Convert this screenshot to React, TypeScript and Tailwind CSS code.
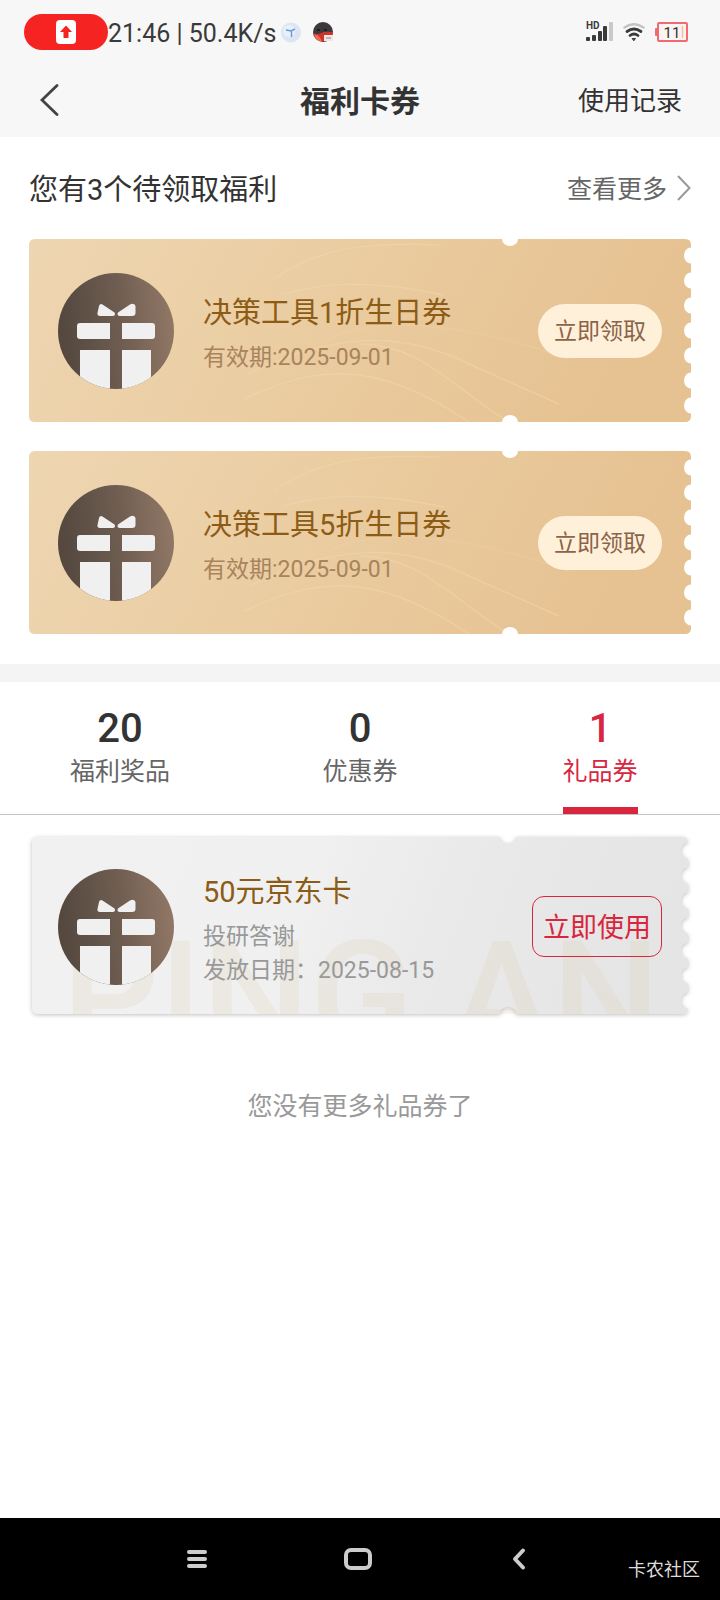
import { useState, type ReactNode } from 'react';

const coupons = [
  { id: 'c1', title: '决策工具1折生日券', expires: '2025-09-01' },
  { id: 'c2', title: '决策工具5折生日券', expires: '2025-09-01' },
];

const tabs = [
  { id: 'prize', label: '福利奖品', count: 20 },
  { id: 'discount', label: '优惠券', count: 0 },
  { id: 'gift', label: '礼品券', count: 1 },
];

// Outline of a ticket: rounded corners, a notch top and bottom, seven bites on the right
function ticketPath(w: number, h: number, notchX: number) {
  const r = 6;
  const step = 25;
  const first = h / 2 - step * 3;
  let d = `M${r} 0H${notchX - 8}A8 7 0 0 0 ${notchX + 8} 0H${w - r}Q${w} 0 ${w} ${r}`;
  for (let i = 0; i < 7; i++) {
    const y = first + i * step;
    d += `V${y - 8}A7 8 0 0 0 ${w} ${y + 8}`;
  }
  d += `V${h - r}Q${w} ${h} ${w - r} ${h}H${notchX + 8}A8 7 0 0 0 ${notchX - 8} ${h}H${r}Q0 ${h} 0 ${h - r}V${r}Q0 0 ${r} 0Z`;
  return d;
}

function GoldTicketShape() {
  return (
    <svg viewBox="0 0 662 183" preserveAspectRatio="none" className="absolute inset-0 h-full w-full" aria-hidden="true">
      <defs>
        <linearGradient id="gold" x1="0" y1="0" x2="1" y2="0.15">
          <stop offset="0" stopColor="#eed6b2" />
          <stop offset="0.5" stopColor="#eaccA0" />
          <stop offset="1" stopColor="#e6c191" />
        </linearGradient>
        <clipPath id="goldClip">
          <path d={ticketPath(662, 183, 481)} />
        </clipPath>
      </defs>
      <g clipPath="url(#goldClip)">
        <rect width="662" height="183" fill="url(#gold)" />
        <g fill="none" stroke="#f3dcb4" strokeWidth="1.5" strokeOpacity="0.4">
          <path d="M225 30Q240 12 252 2" strokeOpacity="0.25" />
          <path d="M245 40C290 8 340 3 410 6" />
          <path d="M255 55C300 42 350 42 415 56" />
          <path d="M300 100C350 75 440 85 540 120" strokeOpacity="0.2" />
          <path d="M220 135C300 95 370 90 440 125T530 165" />
          <path d="M330 105C390 105 420 145 475 180" />
          <path d="M215 160C280 130 340 115 440 183" />
        </g>
      </g>
    </svg>
  );
}

function SilverTicketShape() {
  return (
    <svg viewBox="0 0 656 177" preserveAspectRatio="none" className="absolute inset-0 h-full w-full overflow-visible drop-shadow-[0_1px_2px_rgba(0,0,0,0.25)]" aria-hidden="true">
      <defs>
        <linearGradient id="silver" x1="0" y1="0" x2="1" y2="0.1">
          <stop offset="0" stopColor="#f1f1f1" />
          <stop offset="0.45" stopColor="#f0f0f0" />
          <stop offset="0.65" stopColor="#eaeaea" />
          <stop offset="1" stopColor="#e5e5e5" />
        </linearGradient>
      </defs>
      <path d={ticketPath(656, 177, 476)} fill="url(#silver)" />
    </svg>
  );
}

function GiftIcon() {
  return (
    <svg viewBox="0 0 116 116" className="size-[116px] shrink-0" aria-hidden="true">
      <defs>
        <linearGradient id="brown" x1="0" y1="0.1" x2="1" y2="0">
          <stop offset="0" stopColor="#54483f" />
          <stop offset="0.5" stopColor="#6f5d51" />
          <stop offset="1" stopColor="#947a67" />
        </linearGradient>
        <clipPath id="disc">
          <circle cx="58" cy="58" r="58" />
        </clipPath>
      </defs>
      <g clipPath="url(#disc)">
        <rect width="116" height="116" fill="url(#brown)" />
        <g fill="#f1f0f0">
          <path d="M44.500 31.500L56.500 39.500Q58 42.500 55 43H42Q39 43 39.500 40L41 33Q42 30 44.500 31.500Z" />
          <path d="M72 31.500L60 39.500Q58.500 42.500 61.500 43H74Q77.500 43 77.500 40V33Q76 29.500 72 31.500Z" />
          <path d="M22 50H52V66H22Q19 66 19 63V53Q19 50 22 50Z" />
          <path d="M64 50H94Q97 50 97 53V63Q97 66 94 66H64Z" />
          <path d="M22 77H52V117H22Z" />
          <path d="M64 77H93V117H64Z" />
        </g>
      </g>
    </svg>
  );
}

function StatusBar() {
  return (
    <div className="flex h-16 items-center pl-6 pr-8 text-[#3a3a3a]">
      <div className="flex h-9 w-[84px] items-center justify-center rounded-full bg-[#f62323]">
        <svg viewBox="0 0 20 24" className="h-6 w-5" aria-hidden="true">
          <rect width="20" height="24" rx="4" fill="#fff" />
          <path d="M10 5.500L16 12H12.500V18H7.500V12H4Z" fill="#f62323" />
        </svg>
      </div>
      <span className="pt-1 text-[25px]">21:46 | 50.4K/s</span>
      <svg viewBox="0 0 22 22" className="ml-1 size-[22px]" aria-hidden="true">
        <circle cx="11" cy="11.500" r="10" fill="#dce5f4" />
        <circle cx="9" cy="10" r="6" fill="#eaf0fa" />
        <path d="M6 9L11.500 10V16M11 10L15 8" stroke="#6f9bd8" strokeWidth="1.500" fill="none" />
      </svg>
      <svg viewBox="0 0 22 22" className="ml-2.5 size-[22px]" aria-hidden="true">
        <circle cx="11" cy="11" r="10" fill="#3b393d" />
        <path d="M1.200 12Q6 14 9 12T20.900 11Q20.500 18 14 20.500Q4 21 1.200 12Z" fill="#cf3328" />
        <path d="M2 14Q7 12 10 20.800Q4 20 2 14Z" fill="#ef6a4b" />
        <path d="M5 9H8M12 9H15" stroke="#17161a" strokeWidth="1.500" />
        <rect x="12" y="14" width="9" height="6" fill="#f0e6e8" />
        <path d="M14 17H19" stroke="#8a8088" />
      </svg>
      <div className="ml-auto flex items-center gap-2.5">
        <svg viewBox="0 0 27 20" className="h-5 w-[27px] overflow-visible" aria-hidden="true">
          <g fill="#3a3a3a">
            <rect x="0" y="15" width="4" height="4" rx="1" />
            <rect x="6" y="13" width="4" height="6" rx="1" />
            <rect x="12" y="9" width="4" height="10" rx="1" />
            <rect x="17" y="4" width="4" height="15" rx="1" />
          </g>
          <rect x="23" y="0" width="4" height="19" rx="1" fill="#c9c9c9" />
          <text x="0" y="7" fontSize="10" fontWeight="700" fill="#3a3a3a">HD</text>
        </svg>
        <svg viewBox="0 0 22 19" className="h-[19px] w-[22px]" fill="none" strokeLinecap="round" aria-hidden="true">
          <path d="M1.500 4.500Q11 -2 20.500 4.500" stroke="#c4c4c4" strokeWidth="2.500" />
          <path d="M4 8.500Q11 3.500 18 8.500" stroke="#3a3a3a" strokeWidth="2.800" />
          <path d="M7 12.500Q11 9.500 15 12.500" stroke="#3a3a3a" strokeWidth="2.800" />
          <path d="M9.500 15.500H12.500L11 17.500Z" fill="#3a3a3a" stroke="#3a3a3a" />
        </svg>
        <svg viewBox="0 0 33 20" className="h-5 w-[33px]" aria-hidden="true">
          <rect x="0" y="6" width="3" height="8" rx="1" fill="#ef6b70" />
          <rect x="3" y="1" width="29" height="18" rx="1" fill="#fbf3f2" stroke="#ef6b70" strokeWidth="2" />
          <path d="M27.500 4V16" stroke="#f4c08c" strokeWidth="1.500" />
          <text x="17" y="16" fontSize="15" textAnchor="middle" fill="#333">11</text>
        </svg>
      </div>
    </div>
  );
}

function TicketBody({ title, children, action }: { title: string; children: ReactNode; action: ReactNode }) {
  return (
    <>
      <GiftIcon />
      <div className="ml-[29px] min-w-0 flex-1 pt-1.5">
        <h3 className="mb-2 text-[29px] leading-10 text-[#8c5c16]">{title}</h3>
        {children}
      </div>
      {action}
    </>
  );
}

export default function App() {
  const [active, setActive] = useState('gift');

  return (
    <div className="flex min-h-screen flex-col bg-white font-[Roboto,'Noto_Sans_CJK_SC',sans-serif] text-[#333]">
      <header className="bg-[#f7f7f7]">
        <StatusBar />
        <div className="grid h-[73px] grid-cols-3 items-center px-[38px]">
          <button type="button" aria-label="返回" className="justify-self-start">
            <svg viewBox="0 0 24 34" className="h-[34px] w-6" fill="none" stroke="#444" strokeWidth="2.800" strokeLinecap="round" aria-hidden="true">
              <path d="M19 1.500L4 16L19 30.500" />
            </svg>
          </button>
          <h1 className="pt-0.5 text-center text-[30px] font-bold">福利卡券</h1>
          <a href="#records" className="justify-self-end pt-0.5 text-[26px]">使用记录</a>
        </div>
      </header>

      <section className="px-[29px] pb-[30px]">
        <div className="flex h-[102px] items-center justify-between">
          <h2 className="pt-1.5 text-[29px]">您有3个待领取福利</h2>
          <a href="#more" className="flex items-center gap-2.5 text-[25px] text-[#666]">
            <span className="pt-1">查看更多</span>
            <svg viewBox="0 0 14 26" className="h-[26px] w-3.5" fill="none" stroke="#999" strokeWidth="2" aria-hidden="true">
              <path d="M1 1L12.500 13L1 25" />
            </svg>
          </a>
        </div>
        <div className="flex flex-col gap-[29px]">
          {coupons.map((c) => (
            <article key={c.id} className="relative h-[183px]">
              <GoldTicketShape />
              <div className="relative flex h-full items-center px-[29px]">
                <TicketBody
                  title={c.title}
                  action={
                    <button type="button" className="h-[54px] rounded-full bg-[#fff0d9] px-4 pt-1 text-[23px] text-[#8b6349]">
                      立即领取
                    </button>
                  }
                >
                  <p className="text-[23px] leading-[34px] text-[#a8835c]">有效期:{c.expires}</p>
                </TicketBody>
              </div>
            </article>
          ))}
        </div>
      </section>

      <div className="h-[18px] bg-[#f4f4f4]" />

      <div role="tablist" className="flex border-b border-[#c4c4c4]">
        {tabs.map((t) => (
          <button
            key={t.id}
            type="button"
            role="tab"
            aria-selected={t.id === active}
            onClick={() => setActive(t.id)}
            className={`relative flex h-[132px] flex-1 flex-col items-center pt-[23px] ${t.id === active ? 'text-[#d9263f]' : ''}`}
          >
            <span className="text-[40px] font-medium leading-[48px]">{t.count}</span>
            <span className={`text-[25px] leading-[38px] ${t.id === active ? '' : 'text-[#666]'}`}>{t.label}</span>
            {t.id === active && <span className="absolute bottom-0 h-[7px] w-[75px] bg-[#d9263f]" />}
          </button>
        ))}
      </div>

      <section className="px-8 pt-[22px]">
        <article className="relative h-[177px]">
          <SilverTicketShape />
          <div className="absolute inset-0 overflow-hidden" aria-hidden="true">
            <span className="absolute left-[30px] top-[78px] whitespace-nowrap text-[152px] font-medium leading-[164px] text-[#dcc8aa]/20">
              PING AN
            </span>
          </div>
          <div className="relative flex h-full items-center px-[26px] pt-0.5">
            <TicketBody
              title="50元京东卡"
              action={
                <button type="button" className="h-[61px] rounded-xl border border-[#d9263f] px-[10px] pt-1 text-[27px] text-[#d9263f]">
                  立即使用
                </button>
              }
            >
              <p className="text-[23px] leading-[34px] text-[#999]">投研答谢</p>
              <p className="text-[23px] leading-[34px] text-[#999]">发放日期：2025-08-15</p>
            </TicketBody>
          </div>
        </article>
        <p className="py-[74px] text-center text-[25px] leading-[38px] text-[#999]">您没有更多礼品券了</p>
      </section>

      <nav className="relative mt-auto flex h-[82px] items-center justify-center gap-[133px] bg-black pr-1">
        <button type="button" aria-label="菜单">
          <svg viewBox="0 0 28 28" className="size-7" stroke="#ccc" strokeWidth="4" strokeLinecap="round" aria-hidden="true">
            <path d="M6 7H22M6 14H22M6 21H22" />
          </svg>
        </button>
        <button type="button" aria-label="主屏幕">
          <svg viewBox="0 0 28 28" className="size-7" fill="none" stroke="#ccc" strokeWidth="4" aria-hidden="true">
            <rect x="2" y="5" width="24" height="18" rx="5" />
          </svg>
        </button>
        <button type="button" aria-label="后退">
          <svg viewBox="0 0 28 28" className="size-7" fill="none" stroke="#ccc" strokeWidth="4" strokeLinecap="round" strokeLinejoin="round" aria-hidden="true">
            <path d="M18 5.500L10 14L18 22.500" />
          </svg>
        </button>
        <span className="absolute bottom-4 right-5 text-lg text-[#ddd]">卡农社区</span>
      </nav>
    </div>
  );
}
